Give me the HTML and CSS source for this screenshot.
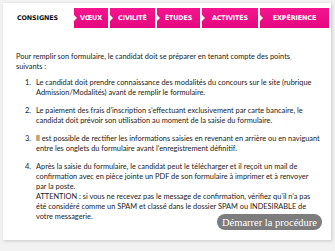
FILE: index.html
```html
<!DOCTYPE html>
<html lang="fr">
<head>
<meta charset="utf-8">
<link rel="stylesheet" href="styles.css">
</head>
<body>
<div class="panel">
  <nav class="tabs">
    <div class="tab active">CONSIGNES</div>
    <div class="tab t-voeux">VŒUX</div>
    <div class="tab t-civ">CIVILITÉ</div>
    <div class="tab t-etu">ÉTUDES</div>
    <div class="tab t-act">ACTIVITÉS</div>
    <div class="tab t-exp">EXPÉRIENCE</div>
  </nav>
  <div class="content">
    <p class="intro">Pour remplir son formulaire, le candidat doit se préparer en tenant compte des points<br>suivants :</p>
    <ol class="steps">
      <li>Le candidat doit prendre connaissance des modalités du concours sur le site (rubrique<br>Admission/Modalités) avant de remplir le formulaire.</li>
      <li>Le paiement des frais d’inscription s’effectuant exclusivement par carte bancaire, le<br>candidat doit prévoir son utilisation au moment de la saisie du formulaire.</li>
      <li>Il est possible de rectifier les informations saisies en revenant en arrière ou en naviguant<br>entre les onglets du formulaire avant l’enregistrement définitif.</li>
      <li>Après la saisie du formulaire, le candidat peut le télécharger et il reçoit un mail de<br>confirmation avec en pièce jointe un PDF de son formulaire à imprimer et à renvoyer<br>par la poste.<br>ATTENTION : si vous ne recevez pas le message de confirmation, vérifiez qu’il n’a pas<br>été considéré comme un SPAM et classé dans le dossier SPAM ou INDESIRABLE de<br>votre messagerie.</li>
    </ol>
    <div class="actions">
      <button class="start">Démarrer la procédure</button>
    </div>
  </div>
</div>
</body>
</html>
```
FILE: styles.css
```css
html, body {
  margin: 0;
  padding: 0;
}
body {
  background: #f2f2f2;
  width: 335px;
  height: 251px;
  overflow: hidden;
  padding-top: 3px;
  box-sizing: border-box;
}
.panel {
  margin-left: 3px;
  width: 328px;
  height: 237px;
  background: #fff;
  box-shadow: 1px 1px 3px rgba(0,0,0,0.18);
  padding-top: 5px;
  box-sizing: border-box;
}
.tabs {
  display: flex;
  gap: 2px;
  height: 20px;
}
.tab {
  flex: none;
  height: 20px;
  display: flex;
  align-items: center;
  justify-content: center;
  font-family: "DejaVu Sans", sans-serif;
  font-weight: bold;
  font-size: 6.4px;
  letter-spacing: -0.1px;
  color: #fff;
  position: relative;
  background: linear-gradient(#f5168f, #e4077e);
}
.tab:not(.active)::before {
  content: "";
  position: absolute;
  left: 0;
  top: 7px;
  border-left: 3px solid #fff;
  border-top: 3px solid transparent;
  border-bottom: 3px solid transparent;
}
.tab.active {
  background: #fff;
  color: #111;
  width: 69px;
}
.t-voeux { width: 34px; }
.t-civ { width: 45px; }
.t-etu { width: 43px; }
.t-act { width: 56px; }
.t-exp { width: 69px; }
.content {
  padding: 24px 4px 0 13px;
  font-family: "Lato", sans-serif;
  font-size: 7.4px;
  line-height: 10px;
  color: #222;
}
.intro {
  margin: 0;
}
.steps {
  margin: 6px 0 0 0;
  padding-left: 17px;
}
.steps li {
  margin-bottom: 8px;
  padding-left: 3px;
}
.actions {
  display: flex;
  justify-content: flex-end;
  margin-top: -16px;
}
.start {
  font-family: "Liberation Serif", serif;
  font-size: 10.5px;
  color: #fff;
  background: #7d7d7d;
  border: none;
  border-radius: 9px;
  height: 16px;
  padding: 0 5px;
  margin-right: 5px;
}
```
